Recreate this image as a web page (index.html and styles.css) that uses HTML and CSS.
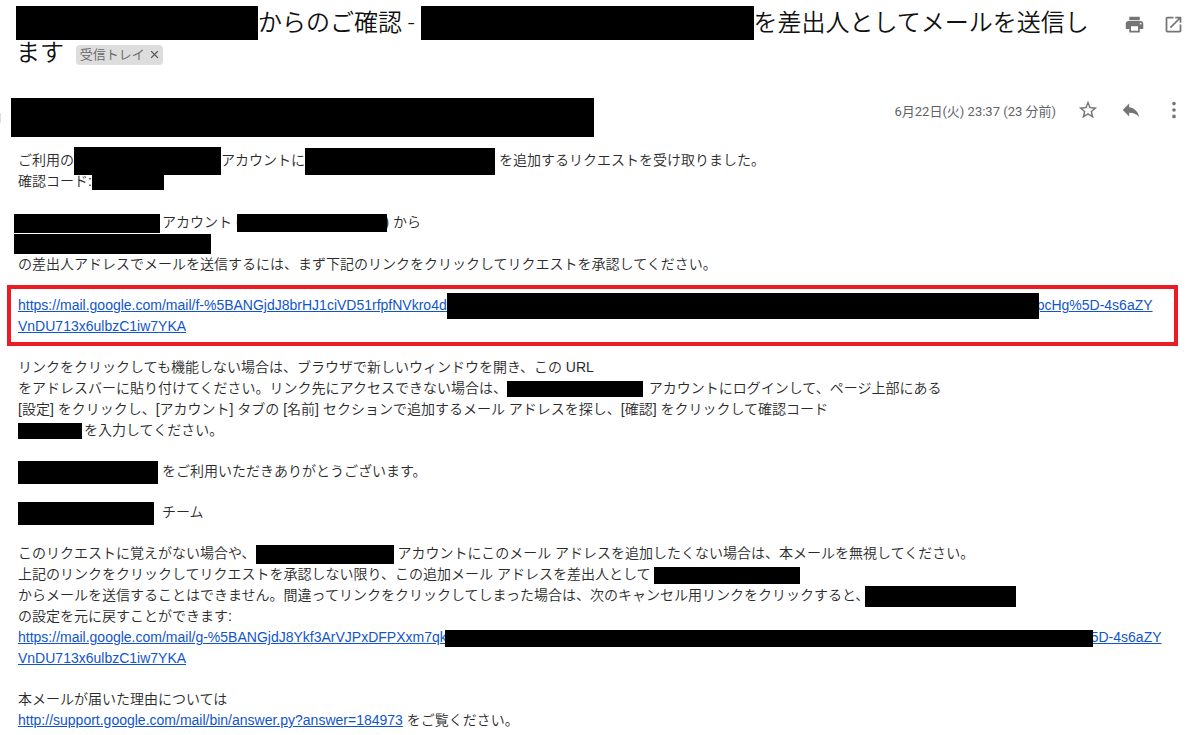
FILE: index.html
```html
<!DOCTYPE html>
<html lang="ja">
<head>
<meta charset="utf-8">
<meta name="viewport" content="width=device-width, initial-scale=1">
<title>メールの確認</title>
<link rel="stylesheet" href="styles.css">
</head>
<body>
<main class="mail">
  <header class="subject">
    <div class="subject-text">
      <h1 class="title"><span class="bar title-bar-a"></span>からのご確認 - <span class="bar title-bar-b"></span>を差出人としてメールを送信します</h1>
      <span class="chip">受信トレイ<button class="chip-close" type="button" aria-label="ラベルを削除"><svg viewBox="0 0 8 8" class="chip-icon"><path d="M1 1l6 6M7 1l-6 6"/></svg></button></span>
    </div>
    <div class="tools">
      <button class="tool" type="button" aria-label="印刷"><svg class="icon" viewBox="0 0 24 24"><path d="M19 8H5c-1.66 0-3 1.34-3 3v6h4v4h12v-4h4v-6c0-1.66-1.34-3-3-3zm-3 11H8v-5h8v5zm3-7c-.55 0-1-.45-1-1s.45-1 1-1 1 .45 1 1-.45 1-1 1zM18 3H6v4h12V3z"/></svg></button>
      <button class="tool" type="button" aria-label="新しいウィンドウで開く"><svg class="icon" viewBox="0 0 24 24"><path d="M19 19H5V5h7V3H5c-1.11 0-2 .9-2 2v14c0 1.1.89 2 2 2h14c1.1 0 2-.9 2-2v-7h-2v7zM14 3v2h3.59l-9.83 9.83 1.41 1.41L19 6.41V10h2V3h-7z"/></svg></button>
    </div>
  </header>

  <div class="sender">
    <span class="avatar-edge"></span>
    <span class="sender-bar"></span>
    <div class="meta">
      <time class="date">6月22日(火) 23:37 (23 分前)</time>
      <div class="tools">
        <button class="tool" type="button" aria-label="スター"><svg class="icon" viewBox="0 0 24 24"><path d="M22 9.24l-7.19-.62L12 2 9.19 8.63 2 9.24l5.46 4.73L5.82 21 12 17.27 18.18 21l-1.63-7.03L22 9.24zM12 15.4l-3.76 2.27 1-4.28-3.32-2.88 4.38-.38L12 6.1l1.71 4.04 4.38.38-3.32 2.88 1 4.28L12 15.4z"/></svg></button>
        <button class="tool" type="button" aria-label="返信"><svg class="icon" viewBox="0 0 24 24"><path d="M10 9V5l-7 7 7 7v-4.100c5 0 8.500 1.600 11 5.100-1-5-4-10-11-11z"/></svg></button>
        <button class="tool" type="button" aria-label="その他"><svg class="icon" viewBox="0 0 24 24"><path d="M12 7a2 2 0 1 0 0-4 2 2 0 0 0 0 4zm0 3a2 2 0 1 0 0 4 2 2 0 0 0 0-4zm0 7a2 2 0 1 0 0 4 2 2 0 0 0 0-4z"/></svg></button>
      </div>
    </div>
  </div>

  <article class="body">
    <p class="para">ご利用の<span class="bar account-bar"></span>アカウントに<span class="bar address-bar"></span> を追加するリクエストを受け取りました。<br>
    確認コード:<span class="bar code-bar"></span></p>

    <p class="para"><span class="bar out name-bar"></span>アカウント (<span class="bar over mail-bar"></span>) から<br>
    <span class="bar out from-bar"></span><br>
    の差出人アドレスでメールを送信するには、まず下記のリンクをクリックしてリクエストを承認してください。</p>

    <p class="para highlight"><a class="link" href="#approve">https://mail.google.com/mail/f-%5BANGjdJ8brHJ1ciVD51rfpfNVkro4dt<span class="bar over approve-bar"></span>pcHg%5D-4s6aZY<br>VnDU713x6ulbzC1iw7YKA</a></p>

    <p class="para">リンクをクリックしても機能しない場合は、ブラウザで新しいウィンドウを開き、この URL<br>
    をアドレスバーに貼り付けてください。リンク先にアクセスできない場合は、<span class="bar login-bar"></span> アカウントにログインして、ページ上部にある<br>
    [設定] をクリックし、[アカウント] タブの [名前] セクションで追加するメール アドレスを探し、[確認] をクリックして確認コード<br>
    <span class="bar entry-bar"></span>を入力してください。</p>

    <p class="para"><span class="bar thanks-bar"></span> をご利用いただきありがとうございます。</p>

    <p class="para"><span class="bar team-bar"></span> チーム</p>

    <p class="para">このリクエストに覚えがない場合や、<span class="bar ignore-bar"></span> アカウントにこのメール アドレスを追加したくない場合は、本メールを無視してください。<br>
    上記のリンクをクリックしてリクエストを承認しない限り、この追加メール アドレスを差出人として <span class="bar extra-bar"></span><br>
    からメールを送信することはできません。間違ってリンクをクリックしてしまった場合は、次のキャンセル用リンクをクリックすると、<span class="bar over cancel-bar"></span><br>
    の設定を元に戻すことができます:<br>
    <a class="link" href="#cancel">https://mail.google.com/mail/g-%5BANGjdJ8Ykf3ArVJPxDFPXxm7qk<span class="bar url-bar"></span>5D-4s6aZY<br>VnDU713x6ulbzC1iw7YKA</a></p>

    <p class="para">本メールが届いた理由については<br>
    <a class="link" href="#support">http://support.google.com/mail/bin/answer.py?answer=184973</a> をご覧ください。</p>
  </article>
</main>
</body>
</html>
```

FILE: styles.css
```css
* {
  box-sizing: border-box;
}

body {
  margin: 0;
  background: #fff;
  color: #2a2a2a;
  font-family: "Liberation Sans", "Noto Sans CJK JP", sans-serif;
  font-size: 14px;
  font-weight: 350;
}

.bar {
  position: relative;
  display: inline-block;
  height: 16px;
  margin-block: -12px;
  vertical-align: middle;
  background: #000;
}

/* Subject line */
.subject {
  display: flex;
  justify-content: space-between;
  align-items: flex-start;
  padding: 8px 16px 0;
}

.subject-text {
  flex: 1;
  max-width: 1088px;
  font-family: Roboto, "Noto Sans CJK JP", sans-serif;
  font-size: 24px;
  line-height: 30px;
}

.title {
  display: inline;
  margin: 0;
  color: #111;
  font-size: 24px;
  font-weight: 350;
}

.title .bar {
  height: 34px;
  vertical-align: 3px;
}

.title-bar-a {
  width: 242px;
}

.title-bar-b {
  width: 333px;
}

.chip {
  display: inline-flex;
  align-items: center;
  gap: 5px;
  margin-block: -4px;
  margin-left: 6px;
  padding: 0 4px;
  border-radius: 4px;
  background: #ddd;
  color: #666;
  font-size: 13px;
  line-height: 20px;
  vertical-align: middle;
}

.chip-close {
  display: flex;
  padding: 0;
  border: 0;
  background: none;
}

.chip-icon {
  width: 9px;
  height: 9px;
  fill: none;
  stroke: #555;
  stroke-width: 1.2;
}

.tools {
  display: flex;
  gap: 17px;
}

.tool {
  display: flex;
  padding: 2px;
  border: 0;
  background: none;
}

.icon {
  width: 22px;
  height: 22px;
  fill: #757575;
}

.subject .tools {
  gap: 14px;
  margin-top: 4px;
  margin-right: -2px;
}

.subject .icon {
  width: 21px;
  height: 21px;
}

/* Sender row */
.sender {
  display: flex;
  align-items: center;
  margin-top: 29px;
  padding-right: 13px;
}

.avatar-edge {
  width: 1px;
  height: 10px;
  margin-right: 10px;
  background: #ddd;
}

.sender-bar {
  flex: 0 1 583px;
  height: 39px;
  background: #000;
}

.meta {
  display: flex;
  align-items: center;
  gap: 19px;
  margin-left: auto;
  margin-bottom: 15px;
}

.date {
  color: #5f6368;
  font-family: Roboto, "Noto Sans CJK JP", sans-serif;
  font-size: 13px;
  font-weight: 400;
}

/* Message text */
.body {
  padding: 12px 20px 0 18px;
  line-height: 21px;
}

.para {
  margin: 0 0 20px;
}

.para:last-child {
  margin-bottom: 0;
}

.link {
  color: #15c;
  text-decoration: underline;
}

.highlight {
  margin: -10px 2px 11px -11px;
  padding: 6px 7px 5px;
  border: 4px solid #ed1c24;
}

.out {
  margin-left: -4px;
}

.over {
  margin-inline: -4px -2px;
}

.account-bar {
  width: 147px;
  height: 28px;
}

.address-bar {
  width: 190px;
  height: 27px;
}

.code-bar {
  width: 72px;
}

.name-bar {
  width: 146px;
  height: 19px;
  margin-right: 2px;
}

.mail-bar {
  width: 150px;
  height: 18px;
}

.from-bar {
  width: 197px;
  height: 20px;
}

.approve-bar {
  width: 592px;
  height: 26px;
}

.login-bar {
  width: 136px;
  margin-right: 2px;
}

.entry-bar {
  width: 64px;
  margin-right: 2px;
}

.thanks-bar {
  width: 140px;
  height: 23px;
}

.team-bar {
  width: 136px;
  height: 23px;
  margin-right: 4px;
}

.ignore-bar {
  width: 138px;
  height: 19px;
}

.extra-bar {
  width: 146px;
  height: 17px;
}

.cancel-bar {
  width: 151px;
  height: 21px;
}

.url-bar {
  width: 648px;
  height: 17px;
  margin-inline: -2px;
}
```
